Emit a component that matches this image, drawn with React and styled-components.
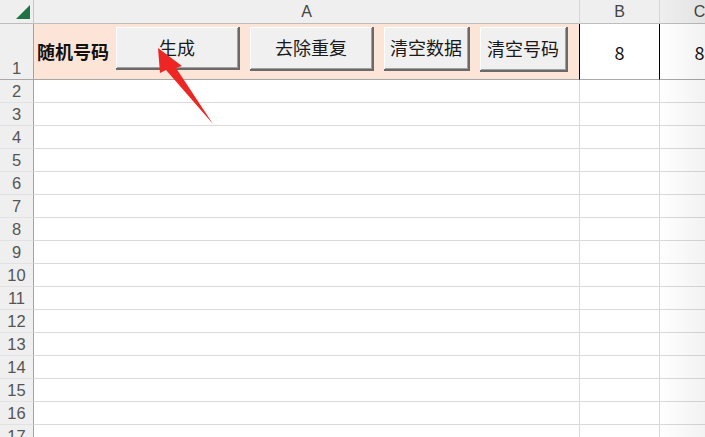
import React from "react";
import styled, { createGlobalStyle } from "styled-components";

const Global = createGlobalStyle`
  html, body { margin: 0; padding: 0; background: #fff; overflow: hidden; }
  body { font-family: "Noto Sans CJK SC", "Liberation Sans", sans-serif; }
`;

const Page = styled.div`
  position: relative;
  width: 705px;
  height: 437px;
  overflow: hidden;
`;

const Sheet = styled.div`
  display: grid;
  grid-template-columns: 34px 546px 80px 80px;
  grid-template-rows: 24px 56px repeat(16, 23px);
  width: 740px;
`;

const Corner = styled.div`
  box-sizing: border-box;
  background: #efefef;
  border-right: 1px solid #c8c8c8;
  border-bottom: 1px solid #bdbdbd;
  display: flex;
  align-items: flex-end;
  justify-content: flex-end;
  padding: 0 3px 4px 0;
`;

const ColHead = styled.div`
  box-sizing: border-box;
  background: #efefef;
  border-right: 1px solid #d6d6d6;
  border-bottom: 1px solid #bdbdbd;
  display: flex;
  align-items: center;
  justify-content: center;
  font-family: "Liberation Sans", sans-serif;
  font-size: 16px;
  color: #444;
  padding-top: 1px;
`;

const RowHead = styled.div`
  box-sizing: border-box;
  background: #efefef;
  border-right: 1px solid #a3a3a3;
  border-bottom: 1px solid ${(p) => (p.$tall ? "#a8a8a8" : "#e2e2e2")};
  display: flex;
  align-items: flex-end;
  justify-content: center;
  font-family: "Liberation Sans", sans-serif;
  font-size: 16.5px;
  line-height: 21px;
  color: #555;
`;

const Cell = styled.div`
  box-sizing: border-box;
  background: ${(p) => p.$bg || "#fff"};
  border-right: 1px solid ${(p) => p.$edge || "#dadada"};
  border-bottom: 1px solid ${(p) => p.$bottom || "#dadada"};
  display: flex;
  align-items: center;
  justify-content: center;
  font-family: "Noto Sans CJK SC", "Liberation Sans", sans-serif;
  font-size: 18px;
  color: #111;
`;

const ControlCell = styled.div`
  box-sizing: border-box;
  background: #fce4d6;
  border-right: 1px solid #000;
  border-bottom: 1px solid #a8a8a8;
  display: flex;
  align-items: flex-start;
  gap: 10px;
  padding: 3px 0 0 3px;
`;

const Label = styled.div`
  font-family: "Noto Sans CJK SC", sans-serif;
  font-weight: 700;
  font-size: 18px;
  height: 48px;
  line-height: 48px;
  color: #111;
  margin-right: -3px;
  white-space: nowrap;
`;

const Button = styled.button`
  box-sizing: border-box;
  width: ${(p) => p.$w}px;
  height: ${(p) => p.$h}px;
  background: #f0f0f0;
  border: none;
  box-shadow: inset -2px -2px 0 #6a6a6a, inset 1px 1px 0 #ffffff,
    inset -3px -3px 0 #a0a0a0;
  font-family: "Noto Sans CJK SC", sans-serif;
  font-size: 18px;
  color: #1a1a1a;
  padding: 0 2px 4px 0;
  white-space: nowrap;
  cursor: default;
`;

const Shade = styled.div`
  position: absolute;
  top: 0;
  right: 0;
  width: 48px;
  height: 100%;
  background: linear-gradient(to right, rgba(0, 0, 0, 0), rgba(0, 0, 0, 0.05));
  pointer-events: none;
`;

const Overlay = styled.svg`
  position: absolute;
  left: 0;
  top: 0;
  pointer-events: none;
`;

const rows = Array.from({ length: 16 }, (_, i) => i + 2);

export default function App() {
  return (
    <Page>
      <Global />
      <Sheet>
        <Corner>
          <svg width="14" height="14" viewBox="0 0 14 14">
            <polygon points="14,0 14,14 0,14" fill="#1f7244" />
          </svg>
        </Corner>
        <ColHead>A</ColHead>
        <ColHead>B</ColHead>
        <ColHead>C</ColHead>

        <RowHead $tall>1</RowHead>
        <ControlCell>
          <Label>随机号码</Label>
          <Button $w={124} $h={43}>生成</Button>
          <Button $w={124} $h={44}>去除重复</Button>
          <Button $w={86} $h={44}>清空数据</Button>
          <Button $w={88} $h={45}>清空号码</Button>
        </ControlCell>
        <Cell $edge="#000" $bottom="#a8a8a8">8</Cell>
        <Cell $edge="#000" $bottom="#a8a8a8">8</Cell>

        {rows.map((r) => (
          <React.Fragment key={r}>
            <RowHead>{r}</RowHead>
            <Cell />
            <Cell />
            <Cell />
          </React.Fragment>
        ))}
      </Sheet>
      <Shade />
      <Overlay width="705" height="437" viewBox="0 0 705 437">
        <polygon
          points="158,48 182,66 176,68 213,124 166,70 160,73"
          fill="#ee2623"
        />
      </Overlay>
    </Page>
  );
}
